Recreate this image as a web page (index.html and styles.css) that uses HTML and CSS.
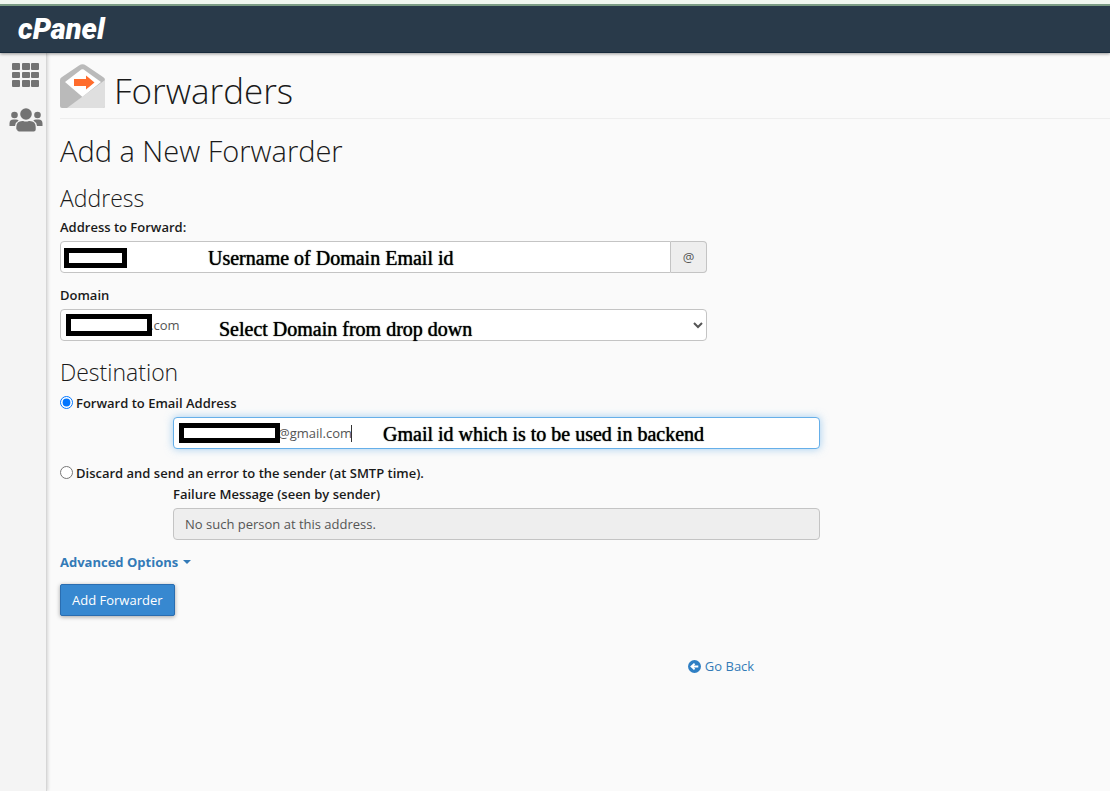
FILE: index.html
```
<!DOCTYPE html>
<html lang="en">
<head>
  <meta charset="UTF-8">
  <meta name="viewport" content="width=device-width, initial-scale=1.0">
  <title>cPanel - Forwarders</title>
  <link rel="stylesheet" href="styles.css">
</head>
<body>
  <header class="topbar">
    <a class="logo" href="#">cPanel</a>
  </header>

  <div class="page">
    <nav class="sidebar">
      <a href="#" aria-label="Home">
        <svg width="28" height="24" viewBox="0 0 28 24" fill="#737373">
          <rect x="0" y="0" width="8" height="7" rx="1"/><rect x="10" y="0" width="8" height="7" rx="1"/><rect x="19" y="0" width="8" height="7" rx="1"/>
          <rect x="0" y="9" width="8" height="6" rx="1"/><rect x="10" y="9" width="8" height="6" rx="1"/><rect x="19" y="9" width="8" height="6" rx="1"/>
          <rect x="0" y="17" width="8" height="7" rx="1"/><rect x="10" y="17" width="8" height="7" rx="1"/><rect x="19" y="17" width="8" height="7" rx="1"/>
        </svg>
      </a>
      <a href="#" aria-label="User Manager">
        <svg width="34" height="24" viewBox="0 0 34 24" fill="#737373">
          <circle cx="5.5" cy="7" r="3.3"/>
          <circle cx="28.5" cy="7" r="3.3"/>
          <path d="M0.5 18v-2.500q0-4 4-4h2.500q1.600 0 2.700 1.100q-3.200 1.700-3.700 5.400z"/>
          <path d="M33.500 18v-2.500q0-4-4-4h-2.500q-1.600 0-2.700 1.100q3.200 1.700 3.700 5.400z"/>
          <circle cx="17" cy="6" r="5.800"/>
          <path d="M7.300 21.500v-2.500q0-6 6-6h.8q3 1.200 5.800 0h.8q6 0 6 6v2.500q0 2-2 2h-14.600q-2 0-2-2z"/>
        </svg>
      </a>
    </nav>

    <main class="content">
      <div class="page-header">
        <svg width="46" height="44" viewBox="0 0 46 44">
          <path d="M0 16Q0 14 2 13L19 1.500Q22.500-1 26 1.500L43 13Q45 14 45 16V42Q45 44 43 44H2Q0 44 0 42z" fill="#bababa"/>
          <path d="M5 18L20 6.500Q22.500 4 25 6.500L41 18L22.500 33z" fill="#fff"/>
          <path d="M7 44L45 16V42Q45 44 43 44z" fill="#dfdfdf"/>
          <path d="M14 15h12v-3.500l8.500 7-8.500 7V22H14z" fill="#ff6c2c"/>
        </svg>
        <h1>Forwarders</h1>
      </div>

      <h2>Add a New Forwarder</h2>

      <form class="forwarder-form">
        <h3>Address</h3>
        <label class="field-label" for="email">Address to Forward:</label>
        <div class="field input-group">
          <input class="control" type="text" id="email">
          <span class="addon">@</span>
          <span class="mask mask-user"></span>
          <span class="note note-user">Username of Domain Email id</span>
        </div>

        <label class="field-label domain-label" for="domain">Domain</label>
        <div class="field">
          <select class="control domain" id="domain">
            <option>.com</option>
          </select>
          <span class="mask mask-domain"></span>
          <span class="note note-domain">Select Domain from drop down</span>
        </div>

        <h3>Destination</h3>
        <div class="radio">
          <input type="radio" name="action" id="forward" checked>
          <label for="forward">Forward to Email Address</label>
        </div>
        <div class="field indent">
          <input class="control active" type="text" aria-label="Forward to Email Address" value="@gmail.com">
          <span class="mask mask-gmail"></span>
          <span class="caret"></span>
          <span class="note note-gmail">Gmail id which is to be used in backend</span>
        </div>

        <div class="radio discard">
          <input type="radio" name="action" id="discard">
          <label for="discard">Discard and send an error to the sender (at SMTP time).</label>
        </div>
        <div class="indent">
          <label class="fail-label" for="failmsg">Failure Message (seen by sender)</label>
          <div class="field">
            <input class="control" type="text" id="failmsg" value="No such person at this address." disabled>
          </div>
        </div>

        <a class="advanced" href="#">Advanced Options
          <svg width="8" height="4" viewBox="0 0 8 4"><path d="M0 0h8L4 4z" fill="currentColor"/></svg>
        </a>
        <button class="btn" type="button">Add Forwarder</button>
      </form>

      <div class="return">
        <a href="#">
          <svg width="13" height="13" viewBox="0 0 13 13">
            <circle cx="6.500" cy="6.500" r="6.500" fill="#2f7fc4"/>
            <path d="M10.300 6.500H4M6.600 3.600L3.500 6.500l3.100 2.900" fill="none" stroke="#fff" stroke-width="1.900"/>
          </svg>
          Go Back
        </a>
      </div>
    </main>
  </div>
</body>
</html>
```
FILE: styles.css
```
* {
  box-sizing: border-box;
}

body {
  margin: 0;
  min-height: 100vh;
  display: flex;
  flex-direction: column;
  background: #fafafa;
  color: #1a1a1a;
  font-family: "Open Sans", sans-serif;
  font-size: 13px;
  line-height: 20px;
}

a {
  color: #337ab7;
  text-decoration: none;
}

/* header */
.topbar {
  display: flex;
  align-items: center;
  height: 53px;
  padding: 2px 18px 0;
  border-top: 4px solid #f0f6ef;
  border-bottom: 1px solid #172a3c;
  background: #293a4a;
  box-shadow: inset 0 2px 0 #7b9b84, 0 1px 3px rgba(0, 0, 0, .4);
  position: relative;
  z-index: 1;
}

.logo {
  color: #fff;
  font-family: Roboto, sans-serif;
  font-size: 29px;
  font-style: italic;
  font-weight: 900;
}

.page {
  display: flex;
  flex: 1;
}

/* left menu */
.sidebar {
  display: flex;
  flex-direction: column;
  align-items: center;
  gap: 21px;
  width: 47px;
  padding: 10px 0 0 5px;
  background: #f4f4f4;
  border-right: 1px solid #d6d6d6;
  box-shadow: 1px 0 3px rgba(0, 0, 0, .15);
}

.sidebar svg {
  display: block;
}

.content {
  flex: 1;
  padding: 11px 0 0 13px;
}

.page-header {
  display: flex;
  align-items: center;
  gap: 8px;
  height: 55px;
  border-bottom: 1px solid #eee;
}

.page-header svg {
  margin-bottom: 10px;
}

h1,
h2,
h3 {
  margin: 0;
  font-weight: 300;
}

h1 {
  font-size: 35px;
  line-height: 40px;
}

h2 {
  margin-top: 16px;
  font-size: 29px;
  line-height: 32px;
}

h3 {
  margin-top: 18px;
  font-size: 23px;
  line-height: 26px;
}

/* form */
.forwarder-form {
  max-width: 760px;
  font-weight: 600;
}

.field-label,
.fail-label {
  display: block;
  margin-top: 6px;
}

.domain-label {
  margin-top: 12px;
}

.fail-label {
  margin-top: 1px;
}

.field {
  position: relative;
  max-width: 647px;
  margin-top: 4px;
}

.indent {
  margin-left: 113px;
}

.input-group {
  display: flex;
}

.control {
  display: block;
  width: 100%;
  height: 32px;
  padding: 0 11px;
  border: 1px solid #c4c4c4;
  border-radius: 4px;
  background: #fff;
  color: #555;
  font-family: inherit;
  font-size: 13px;
}

.control:disabled {
  background: #eee;
}

.input-group .control {
  border-radius: 4px 0 0 4px;
}

.addon {
  flex: none;
  width: 36px;
  border: 1px solid #c4c4c4;
  border-left: 0;
  border-radius: 0 4px 4px 0;
  background: #eee;
  color: #555;
  font-weight: 400;
  line-height: 30px;
  text-align: center;
}

.domain {
  padding: 0 0 0 85px;
}

.active {
  padding-left: 104px;
  border-color: #66afe9;
  box-shadow: 0 0 8px rgba(102, 175, 233, .6);
}

/* boxes that hide the account names */
.mask {
  position: absolute;
  border: 5px solid #000;
  background: #fff;
}

.mask-user {
  top: 7px;
  left: 4px;
  width: 63px;
  height: 20px;
}

.mask-domain {
  top: 5px;
  left: 6px;
  width: 86px;
  height: 22px;
}

.mask-gmail {
  top: 6px;
  left: 6px;
  width: 101px;
  height: 20px;
}

.caret {
  position: absolute;
  top: 8px;
  left: 178px;
  width: 1px;
  height: 17px;
  background: #333;
}

.note {
  position: absolute;
  top: 7px;
  color: #000;
  font-family: "Liberation Serif", serif;
  font-size: 20px;
  font-weight: 400;
  text-shadow: 0 0 1px #000;
  white-space: nowrap;
  pointer-events: none;
}

.note-user {
  left: 148px;
}

.note-domain {
  top: 10px;
  left: 159px;
}

.note-gmail {
  left: 210px;
}

.radio {
  display: flex;
  align-items: center;
  gap: 3px;
  margin-top: 8px;
}

.radio input {
  width: 13px;
  height: 13px;
  margin: 0 0 2px;
}

.discard {
  margin-top: 14px;
}

.advanced {
  display: flex;
  align-items: center;
  gap: 5px;
  margin: 12px 0;
  font-weight: 700;
}

.btn {
  display: block;
  height: 32px;
  padding: 0 11px;
  border: 1px solid #2a6db0;
  border-radius: 2px;
  background: #3788d0;
  box-shadow: 0 1px 4px rgba(0, 0, 0, .35);
  color: #fff;
  font-family: inherit;
  font-size: 13px;
}

.return {
  display: flex;
  justify-content: center;
  margin-top: 40px;
  padding-left: 272px;
}

.return a {
  display: flex;
  align-items: center;
  gap: 4px;
}
```
